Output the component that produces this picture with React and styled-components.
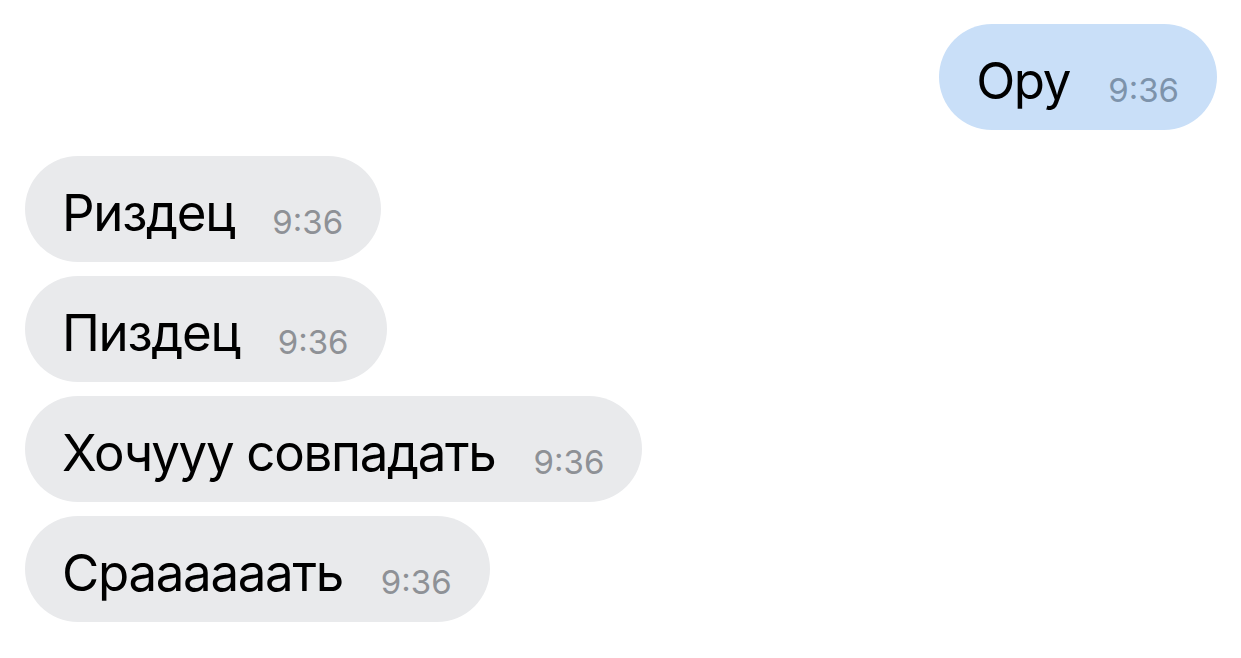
import React from 'react';
import styled, { createGlobalStyle } from 'styled-components';

const GlobalStyle = createGlobalStyle`
    html, body {
        margin: 0;
        padding: 0;
        background: #fff;
    }

    body {
        font-family: Inter, "Noto Sans", "Liberation Sans", sans-serif;
        -webkit-font-smoothing: antialiased;
    }
`

const Chat = styled.main`
    display: flex;
    flex-direction: column;
    gap: 26px;
    padding: 24px 24px 0 25px;
`

const Group = styled.section`
    display: flex;
    flex-direction: column;
    gap: 14px;
    align-items: ${props => props.$out ? 'flex-end' : 'flex-start'};
`

const Bubble = styled.div`
    box-sizing: border-box;
    height: 106px;
    padding: 8px 38px 0 37px;
    border-radius: 53px;
    background: ${props => props.$out ? '#c9dff8' : '#e9eaec'};
    color: #000;
    font-size: 51px;
    line-height: 98px;
    letter-spacing: -1.3px;
    white-space: nowrap;
`

const Time = styled.span`
    margin-left: 38px;
    color: ${props => props.$out ? '#7d93ab' : '#8e9196'};
    font-size: 33px;
    letter-spacing: 0;
    vertical-align: -3px;
`

const outgoing = [
    { text: 'Ору', time: '9:36' }
];

const incoming = [
    { text: 'Риздец', time: '9:36' },
    { text: 'Пиздец', time: '9:36' },
    { text: 'Хочууу совпадать', time: '9:36' },
    { text: 'Сраааааать', time: '9:36' }
];

const Message = ({ msg, out }) => (
    <Bubble $out={out}>
        {msg.text}
        <Time $out={out}>{msg.time}</Time>
    </Bubble>
);

const App = () => {
    return (
        <Chat>
            <GlobalStyle />
            <Group $out>
                {outgoing.map((m, i) => <Message key={i} msg={m} out />)}
            </Group>
            <Group>
                {incoming.map((m, i) => <Message key={i} msg={m} />)}
            </Group>
        </Chat>
    );
};

export default App;
